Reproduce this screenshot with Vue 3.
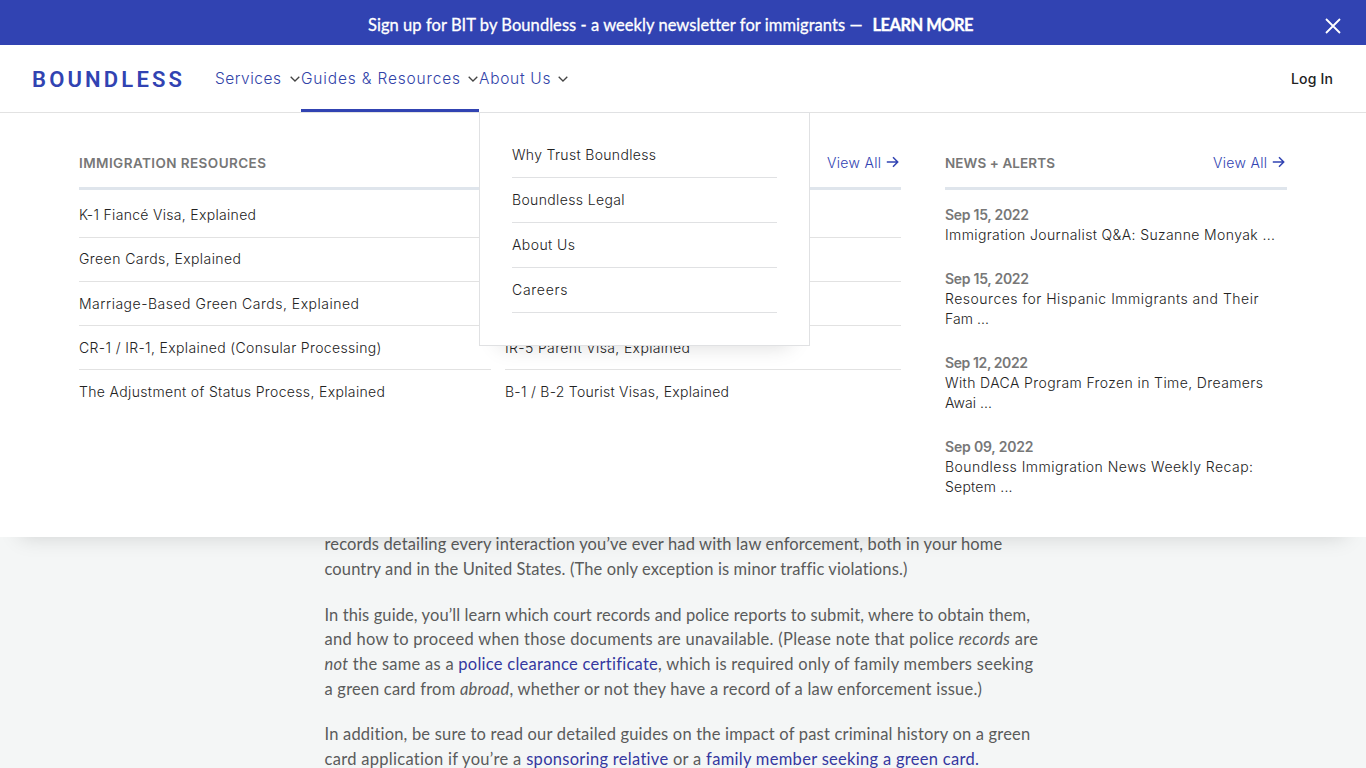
<template>
  <div class="page">
    <div class="banner">
      <p class="banner-text">
        <span v-fit="494">Sign up for BIT by Boundless - a weekly newsletter for immigrants —</span>
        <a class="banner-link" v-fit="101">LEARN MORE</a>
      </p>
      <button class="close" aria-label="Close">
        <svg width="16" height="16" viewBox="0 0 16 16"><path d="M1 1L15 15M15 1L1 15" /></svg>
      </button>
    </div>

    <header class="header">
      <a class="logo"><span v-fit="150">BOUNDLESS</span></a>
      <nav class="nav">
        <a v-for="item in nav" :key="item.label" class="nav-item" :class="[item.name, { active: item.active }]">
          <span v-fit="item.width">{{ item.label }}</span>
          <svg class="chevron" width="10" height="6" viewBox="0 0 10 6"><path d="M.7 .7L5 5L9.300 .7" /></svg>
        </a>
      </nav>
      <a class="login" v-fit="42">Log In</a>

      <div class="dropdown">
        <a v-for="item in about" :key="item.label" class="dropdown-item">
          <span v-fit="item.width">{{ item.label }}</span>
        </a>
      </div>
    </header>

    <section class="mega">
      <div class="resources">
        <div class="head">
          <h3 v-fit="187">IMMIGRATION RESOURCES</h3>
          <a class="view-all">
            <span v-fit="54">View All</span>
            <svg width="13" height="12" viewBox="0 0 13 12"><path d="M.8 6H11.500M7 1.300L11.700 6L7 10.700" /></svg>
          </a>
        </div>
        <div class="columns">
          <ul v-for="(column, i) in resources" :key="i" class="links">
            <li v-for="(link, j) in column" :key="j">
              <a v-if="link" v-fit="link.width">{{ link.label }}</a>
            </li>
          </ul>
        </div>
      </div>

      <div class="news">
        <div class="head">
          <h3 v-fit="110">NEWS + ALERTS</h3>
          <a class="view-all">
            <span v-fit="54">View All</span>
            <svg width="13" height="12" viewBox="0 0 13 12"><path d="M.8 6H11.500M7 1.300L11.700 6L7 10.700" /></svg>
          </a>
        </div>
        <article v-for="(post, i) in news" :key="i" class="post">
          <time v-fit="post.dateWidth">{{ post.date }}</time>
          <a v-for="line in post.lines" :key="line.text" v-fit="line.width">{{ line.text }}</a>
        </article>
      </div>
    </section>

    <main class="content">
      <p>
        <span class="line" v-fit="678">records detailing every interaction you’ve ever had with law enforcement, both in your home</span>
        <span class="line" v-fit="582.5">country and in the United States. (The only exception is minor traffic violations.)</span>
      </p>
      <p>
        <span class="line" v-fit="705.5">In this guide, you’ll learn which court records and police reports to submit, where to obtain them,</span>
        <span class="line" v-fit="713.5">and how to proceed when those documents are unavailable. (Please note that police <em>records</em> are</span>
        <span class="line" v-fit="708.5"><em>not</em> the same as a <a>police clearance certificate</a>, which is required only of family members seeking</span>
        <span class="line" v-fit="657.5">a green card from <em>abroad</em>, whether or not they have a record of a law enforcement issue.)</span>
      </p>
      <p>
        <span class="line" v-fit="706">In addition, be sure to read our detailed guides on the impact of past criminal history on a green</span>
        <span class="line" v-fit="655">card application if you’re a <a>sponsoring relative</a> or a <a>family member seeking a green card.</a></span>
      </p>
    </main>
  </div>
</template>

<script setup>
    // Tracks a label so that it fills the given width
    const vFit = {
        mounted(el, { value }) {
            const gaps = el.textContent.length - 1
            const range = document.createRange()
            range.selectNodeContents(el)
            const natural = range.getBoundingClientRect().width
            const spacing = (value - natural) / gaps
            el.style.letterSpacing = `${spacing.toFixed(3)}px`
            el.style.marginRight = `${(-spacing).toFixed(3)}px`
        }
    }

    const nav = [
        { name: 'services', label: 'Services', width: 66 },
        { name: 'guides', label: 'Guides & Resources', width: 159, active: true },
        { name: 'about', label: 'About Us', width: 71.5 }
    ]

    const about = [
        { label: 'Why Trust Boundless', width: 144 },
        { label: 'Boundless Legal', width: 112.5 },
        { label: 'About Us', width: 63 },
        { label: 'Careers', width: 55.5 }
    ]

    const resources = [
        [
            { label: 'K-1 Fiancé Visa, Explained', width: 177 },
            { label: 'Green Cards, Explained', width: 162 },
            { label: 'Marriage-Based Green Cards, Explained', width: 280 },
            { label: 'CR-1 / IR-1, Explained (Consular Processing)', width: 302.5 },
            { label: 'The Adjustment of Status Process, Explained', width: 306 }
        ],
        [
            null,
            null,
            null,
            { label: 'IR-5 Parent Visa, Explained', width: 185 },
            { label: 'B-1 / B-2 Tourist Visas, Explained', width: 224 }
        ]
    ]

    const news = [
        {
            date: 'Sep 15, 2022',
            dateWidth: 84,
            lines: [{ text: 'Immigration Journalist Q&A: Suzanne Monyak ...', width: 330 }]
        },
        {
            date: 'Sep 15, 2022',
            dateWidth: 84,
            lines: [
                { text: 'Resources for Hispanic Immigrants and Their', width: 313.5 },
                { text: 'Fam ...', width: 44 }
            ]
        },
        {
            date: 'Sep 12, 2022',
            dateWidth: 83,
            lines: [
                { text: 'With DACA Program Frozen in Time, Dreamers', width: 318 },
                { text: 'Awai ...', width: 47 }
            ]
        },
        {
            date: 'Sep 09, 2022',
            dateWidth: 88.5,
            lines: [
                { text: 'Boundless Immigration News Weekly Recap:', width: 308 },
                { text: 'Septem ...', width: 67.5 }
            ]
        }
    ]
</script>

<style>
    body {
        margin: 0;
        overflow: hidden;
    }
</style>

<style scoped>
    .page {
        height: 768px;
        overflow: hidden;
        background-color: #f4f6f6;
        font-family: Inter, "Liberation Sans", sans-serif;
        font-size: 14px;
        font-weight: 300;
        color: #222;
        white-space: nowrap;
    }
    h3, p, ul {
        margin: 0;
        padding: 0;
        list-style: none;
    }
    svg {
        display: block;
        fill: none;
        flex: none;
    }

    .banner {
        height: 45px;
        display: flex;
        align-items: center;
        background-color: #3143b2;
        color: #fff;
    }
    .banner-text {
        display: flex;
        flex: 1;
        padding: 4px 0 0 368px;
        font-family: Lato, sans-serif;
        font-size: 16.500px;
        font-weight: 400;
        line-height: 24px;
        -webkit-text-stroke: 0.300px #fff;
    }
    .banner-link {
        margin-left: 10px;
        font-weight: 700;
    }
    .close {
        padding: 6px 25px 0 0;
        border: 0;
        background: none;
    }
    .close svg {
        stroke: #fff;
        stroke-width: 1.800;
    }

    .header {
        position: relative;
        z-index: 3;
        box-sizing: border-box;
        height: 68px;
        padding: 0 33px 0 32px;
        display: flex;
        align-items: stretch;
        background-color: #fff;
        border-bottom: 1px solid #e2e2e2;
    }
    .logo {
        width: 183px;
        flex: none;
        font-family: Roboto, sans-serif;
        font-size: 22px;
        font-weight: 600;
        line-height: 69px;
        color: #3143b2;
    }
    .nav {
        display: flex;
        flex: 1;
    }
    .nav-item {
        box-sizing: border-box;
        height: 67px;
        display: flex;
        align-items: center;
        justify-content: space-between;
        border-bottom: 3px solid transparent;
        padding: 3px 1px 0 0;
        font-size: 15.500px;
        color: #3143a8;
    }
    .nav-item.services {
        width: 86px;
    }
    .nav-item.guides {
        width: 178px;
    }
    .nav-item.about {
        width: 90px;
    }
    .nav-item.active {
        border-bottom-color: #3143b2;
    }
    .chevron {
        stroke: #444;
        stroke-width: 1.300;
    }
    .login {
        flex: none;
        line-height: 68px;
        font-weight: 500;
        color: #222;
    }

    .dropdown {
        position: absolute;
        top: 67px;
        left: 479px;
        box-sizing: border-box;
        width: 331px;
        height: 234px;
        padding: 20px 32px 0;
        background-color: #fff;
        border: 1px solid #e0e1e3;
        box-shadow: 0 20px 20px -20px rgba(0, 0, 0, 0.150);
    }
    .dropdown-item {
        display: block;
        box-sizing: border-box;
        height: 45px;
        line-height: 44px;
        border-bottom: 1px solid #e0e1e3;
    }

    .mega {
        position: relative;
        z-index: 2;
        box-sizing: border-box;
        height: 424px;
        padding: 25px 79px 0;
        display: flex;
        gap: 44px;
        background-color: #fff;
        box-shadow: 0 20px 20px -20px rgba(0, 0, 0, 0.150);
    }
    .resources {
        width: 822px;
    }
    .news {
        width: 342px;
    }
    .head {
        height: 49px;
        display: flex;
        align-items: center;
        justify-content: space-between;
        border-bottom: 3px solid #dfe5ec;
    }
    .head h3 {
        font-size: 13.500px;
        font-weight: 600;
        color: #777;
    }
    .view-all {
        display: flex;
        align-items: center;
        gap: 5px;
        padding-right: 2px;
        color: #3143b2;
    }
    .view-all svg {
        margin-top: -2px;
        stroke: #3143b2;
        stroke-width: 1.500;
    }
    .columns {
        display: grid;
        grid-template-columns: 412px 396px;
        gap: 14px;
        padding-top: 4px;
    }
    .links li {
        box-sizing: border-box;
        height: 44px;
        line-height: 42px;
        border-bottom: 1px solid #e2e2e2;
    }
    .links li:nth-child(n + 3) {
        line-height: 44px;
    }
    .links li:last-child {
        border-bottom: 0;
    }
    .post {
        display: flex;
        flex-direction: column;
        align-items: flex-start;
        margin-bottom: 24px;
        line-height: 20px;
    }
    .head + .post {
        margin-top: 15px;
    }
    .post time {
        font-weight: 600;
        color: #777;
    }

    .content {
        margin-top: -4.600px;
        padding-left: 324.500px;
        font-family: Lato, sans-serif;
        font-size: 16.500px;
        font-weight: 400;
        line-height: 24.750px;
        color: #5a5b5b;
    }
    .content p {
        margin-bottom: 20.750px;
    }
    .content .line {
        display: block;
    }
    .content a {
        color: #3438a0;
    }
</style>
